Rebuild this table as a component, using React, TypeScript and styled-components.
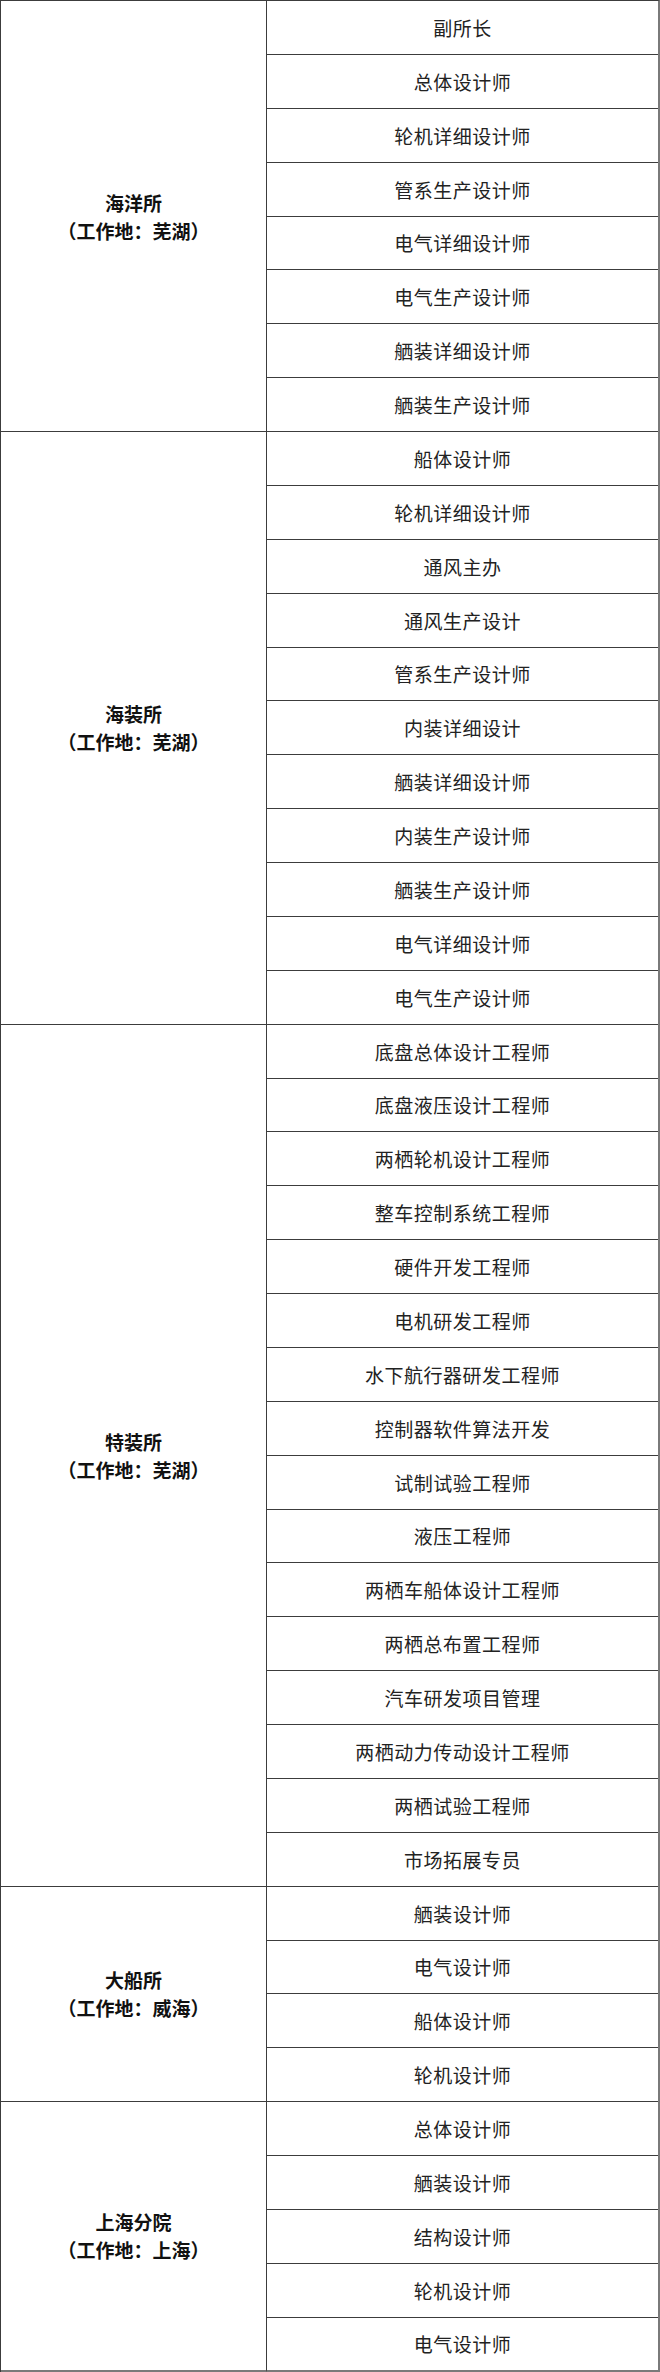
import styled, { createGlobalStyle } from "styled-components";

const GlobalStyle = createGlobalStyle`
  html, body {
    margin: 0;
    padding: 0;
    background: #ffffff;
  }
  body {
    font-family: "Noto Sans CJK SC", "Noto Sans", sans-serif;
  }
`;

const ROW_H = (2372 - 1) / 44;

const groups = [
  {
    name: "海洋所",
    place: "（工作地：芜湖）",
    jobs: [
      "副所长",
      "总体设计师",
      "轮机详细设计师",
      "管系生产设计师",
      "电气详细设计师",
      "电气生产设计师",
      "舾装详细设计师",
      "舾装生产设计师",
    ],
  },
  {
    name: "海装所",
    place: "（工作地：芜湖）",
    jobs: [
      "船体设计师",
      "轮机详细设计师",
      "通风主办",
      "通风生产设计",
      "管系生产设计师",
      "内装详细设计",
      "舾装详细设计师",
      "内装生产设计师",
      "舾装生产设计师",
      "电气详细设计师",
      "电气生产设计师",
    ],
  },
  {
    name: "特装所",
    place: "（工作地：芜湖）",
    jobs: [
      "底盘总体设计工程师",
      "底盘液压设计工程师",
      "两栖轮机设计工程师",
      "整车控制系统工程师",
      "硬件开发工程师",
      "电机研发工程师",
      "水下航行器研发工程师",
      "控制器软件算法开发",
      "试制试验工程师",
      "液压工程师",
      "两栖车船体设计工程师",
      "两栖总布置工程师",
      "汽车研发项目管理",
      "两栖动力传动设计工程师",
      "两栖试验工程师",
      "市场拓展专员",
    ],
  },
  {
    name: "大船所",
    place: "（工作地：威海）",
    jobs: ["舾装设计师", "电气设计师", "船体设计师", "轮机设计师"],
  },
  {
    name: "上海分院",
    place: "（工作地：上海）",
    jobs: ["总体设计师", "舾装设计师", "结构设计师", "轮机设计师", "电气设计师"],
  },
];

const Table = styled.div`
  width: 660px;
  box-sizing: border-box;
  border-top: 1px solid #3c3c3c;
  border-left: 1px solid #3c3c3c;
  border-right: 2px solid #7a7a7a;
  display: flex;
  flex-direction: column;
`;

const Group = styled.div`
  display: flex;
`;

const DeptCell = styled.div`
  width: 266px;
  flex-shrink: 0;
  box-sizing: border-box;
  border-right: 1px solid #3c3c3c;
  border-bottom: 1px solid #3c3c3c;
  display: flex;
  flex-direction: column;
  align-items: center;
  justify-content: center;
  font-size: 19px;
  font-weight: 700;
  line-height: 28px;
  color: #111;
  padding-top: 1px;
`;

const JobList = styled.div`
  flex: 1;
  display: flex;
  flex-direction: column;
`;

const JobRow = styled.div<{ $last: boolean }>`
  height: ${ROW_H}px;
  box-sizing: border-box;
  border-bottom: ${(p) => (p.$last ? "2px solid #7a7a7a" : "1px solid #3c3c3c")};
  display: flex;
  align-items: center;
  justify-content: center;
  font-size: 19px;
  color: #222;
  letter-spacing: 0.5px;
`;

export default function App() {
  return (
    <>
      <GlobalStyle />
      <Table>
        {groups.map((g, gi) => {
          const lastGroup = gi === groups.length - 1;
          return (
            <Group key={g.name}>
              <DeptCell
                style={lastGroup ? { borderBottom: "2px solid #7a7a7a" } : undefined}
              >
                <span>{g.name}</span>
                <span>{g.place}</span>
              </DeptCell>
              <JobList>
                {g.jobs.map((j, ji) => (
                  <JobRow key={j + ji} $last={lastGroup && ji === g.jobs.length - 1}>
                    {j}
                  </JobRow>
                ))}
              </JobList>
            </Group>
          );
        })}
      </Table>
    </>
  );
}
